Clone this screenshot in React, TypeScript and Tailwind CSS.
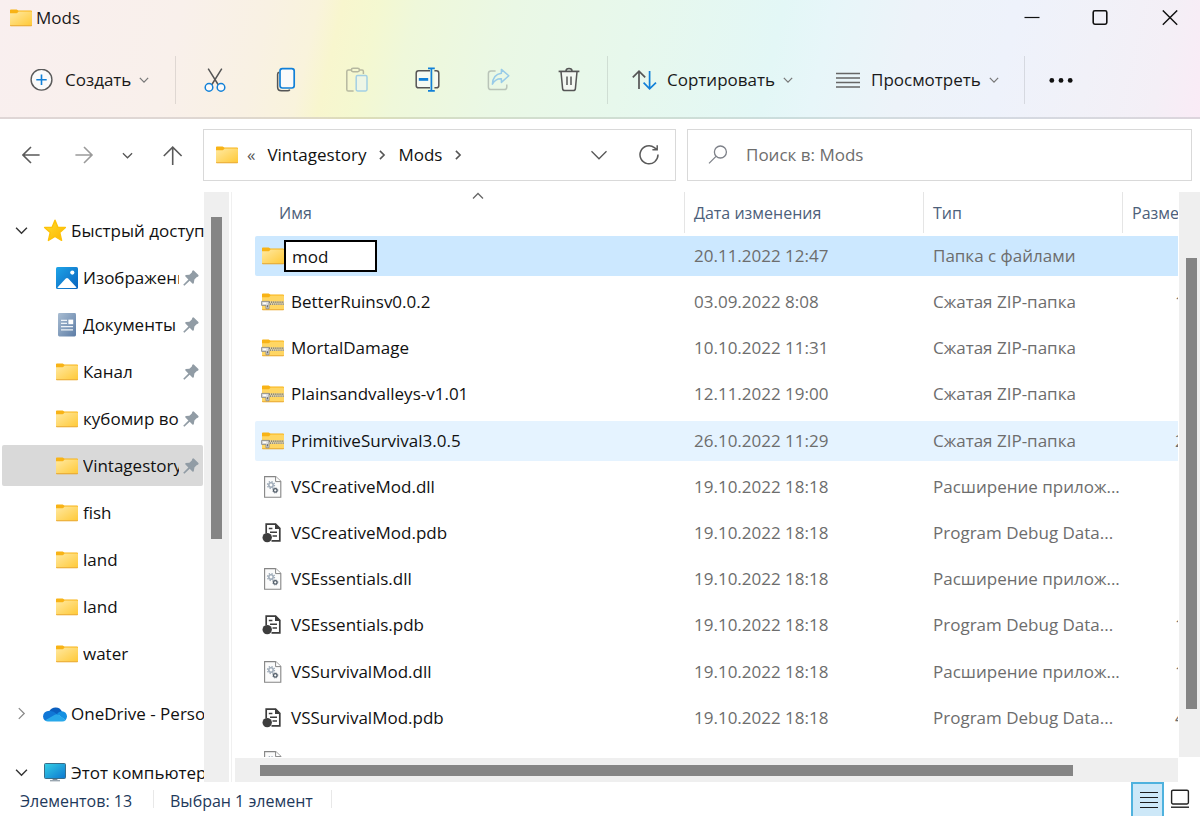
import React from "react";

type IconProps = { className?: string };

function FolderIcon({ className = "" }: IconProps) {
  return (
    <svg className={`shrink-0 ${className}`} width="22" height="18" viewBox="0 0 22 18" aria-hidden="true">
      <defs>
        <linearGradient id="folderFace" x1="0" y1="0" x2="1" y2="1">
          <stop offset="0" stopColor="#ffe9a2" />
          <stop offset="1" stopColor="#ffc937" />
        </linearGradient>
      </defs>
      <path d="M0 1.2Q0 .4 .9 .4H6.6L8.4 1.6H21Q22 1.6 22 2.6V8H0Z" fill="#f8b316" />
      <path d="M0 4.2H6.6Q7.2 4.2 7.7 3.6L8.6 2.6H21.2Q22 2.6 22 3.4V16.6H0Z" fill="url(#folderFace)" />
      <path d="M0 16.2H22V16.6Q22 17.3 21.2 17.3H.8Q0 17.3 0 16.6Z" fill="#e9a21d" />
    </svg>
  );
}

function ZipIcon() {
  return (
    <svg className="shrink-0" width="23" height="18" viewBox="0 0 23 18" aria-hidden="true">
      <path d="M1 1.2Q1 .4 1.9 .4H7.6L9.4 1.6H22Q23 1.6 23 2.6V8H1Z" fill="#f8b316" />
      <path d="M1 4.2H7.6Q8.2 4.2 8.7 3.6L9.6 2.6H22.2Q23 2.6 23 3.4V16.6H1Z" fill="#ffd663" />
      <path d="M1 16.2H23V16.6Q23 17.3 22.2 17.3H1.8Q1 17.3 1 16.6Z" fill="#e9a21d" />
      <rect x="8" y="8.4" width="15" height="3.6" fill="#e6d9b0" />
      <path d="M8 9.2H23" stroke="#5c594f" strokeWidth="1.3" strokeDasharray="1.1 1" />
      <path d="M9 11.2H23" stroke="#6f6b60" strokeWidth="1.3" strokeDasharray="1.1 1" />
      <path d="M.6 8.4H8V15.8H5V12.4H.6Z" fill="#dedede" stroke="#8b8b8b" strokeWidth=".9" />
      <path d="M2.2 10.4H5.2" stroke="#fff" strokeWidth="1.4" />
      <path d="M6.5 12.2V14.4" stroke="#6b6b6b" strokeWidth="1.1" />
    </svg>
  );
}

function DllIcon() {
  return (
    <svg className="ml-[9px] shrink-0" width="18" height="22" viewBox="0 0 18 22" aria-hidden="true">
      <path d="M.6 .6H11.6L16.8 5.6V21.3H.6Z" fill="#fbfbfb" stroke="#858585" strokeWidth="1.1" />
      <path d="M11.6 .6V5.6H16.8" fill="#fff" stroke="#858585" strokeWidth="1" />
      <circle cx="7" cy="9" r="2.2" fill="none" stroke="#9fabb8" strokeWidth="1.5" />
      <circle cx="7" cy="9" r="3.5" fill="none" stroke="#9fabb8" strokeWidth="1.3" strokeDasharray="1.375 1.375" />
      <circle cx="11.3" cy="14.4" r="1.8" fill="none" stroke="#4d5965" strokeWidth="1.3" />
      <circle cx="11.3" cy="14.4" r="2.6" fill="none" stroke="#4d5965" strokeWidth=".7" strokeDasharray="1.02 1.02" />
    </svg>
  );
}

function PdbIcon() {
  return (
    <svg className="shrink-0" width="20" height="20" viewBox="0 0 20 20" aria-hidden="true">
      <path d="M4.2 10V1.2H13.6L17.8 5.4V17.8H9.5" fill="#fff" stroke="#3d3d3d" strokeWidth="1.7" />
      <path d="M13 .6V6H18.4Z" fill="#3d3d3d" />
      <path d="M6.8 5.6H10.4M8 9.2H15M10.5 12.9H15" stroke="#3d3d3d" strokeWidth="1.5" />
      <circle cx="5.2" cy="14.6" r="4.7" fill="#3d3d3d" />
    </svg>
  );
}

function Chevron({
  dir,
  size = 12,
  weight = 15,
  className = "",
}: {
  dir: "down" | "up" | "right";
  size?: number;
  weight?: number;
  className?: string;
}) {
  const d = dir === "down" ? "M1 3.5L6 8.5L11 3.5" : dir === "up" ? "M1 8.5L6 3.5L11 8.5" : "M3.5 1L8.5 6L3.5 11";
  return (
    <svg className={`shrink-0 ${className}`} width={size} height={size} viewBox="0 0 12 12" fill="none" stroke="currentColor" aria-hidden="true">
      <path d={d} strokeWidth={weight / size} />
    </svg>
  );
}

function PinIcon() {
  return (
    <svg className="shrink-0" width="16" height="16" viewBox="0 0 16 16" fill="#919ca5" aria-hidden="true">
      <path d="M9.4 .8Q10.2 0 11 .7L15.4 5.1Q15.9 5.8 15.2 6.4L13.6 7.2L11.4 9.6L10.8 13.2Q10.2 14 9.4 13.4L6.7 10.7L1.4 15.8L.2 14.8L5.4 9.4L2.4 6.4Q1.9 5.6 2.8 5.1L6.4 4.8L8.8 2.5Z" />
    </svg>
  );
}

function StarIcon() {
  return (
    <svg className="shrink-0" width="24" height="24" viewBox="0 0 24 24" aria-hidden="true">
      <defs>
        <linearGradient id="starFace" x1="0" y1="0" x2="1" y2="1">
          <stop offset="0" stopColor="#ffdf2e" />
          <stop offset="1" stopColor="#fcb400" />
        </linearGradient>
      </defs>
      <path
        d="M12 1.2L15 8.4H22.4L16.8 13.6L18.6 21.4L12 17.4L5.4 21.4L7.2 13.6L1.6 8.4H9Z"
        fill="url(#starFace)"
        stroke="#fdc20a"
        strokeWidth="1.4"
        strokeLinejoin="round"
      />
    </svg>
  );
}

function PicturesIcon() {
  return (
    <svg className="shrink-0" width="22" height="22" viewBox="0 0 22 22" aria-hidden="true">
      <defs>
        <linearGradient id="picFace" x1="0" y1="0" x2="1" y2="1">
          <stop offset="0" stopColor="#1ea4e8" />
          <stop offset="1" stopColor="#0a62bd" />
        </linearGradient>
      </defs>
      <rect width="22" height="22" rx="1.6" fill="url(#picFace)" />
      <path d="M1.4 20.6L9.8 11.6Q11 10.4 12.2 11.6L20.6 20.6Q20 21 19.5 21H2.5Q1.8 21 1.4 20.6Z" fill="#fff" />
      <circle cx="16.3" cy="5.6" r="2.1" fill="#fff" />
    </svg>
  );
}

function DocumentsIcon() {
  return (
    <svg className="mx-px shrink-0" width="20" height="24" viewBox="0 0 20 24" aria-hidden="true">
      <defs>
        <linearGradient id="docFace" x1="0" y1="0" x2="1" y2="1">
          <stop offset="0" stopColor="#a9bdd2" />
          <stop offset="1" stopColor="#5d7da6" />
        </linearGradient>
      </defs>
      <rect x="1" width="18" height="23.4" rx="1.4" fill="url(#docFace)" />
      <path d="M4 7.4H10M4 10.4H10M4 13.6H16M4 16.8H16" stroke="#eef3f8" strokeWidth="1.3" />
      <rect x="11.4" y="6.6" width="4.8" height="4.6" fill="#fff" />
    </svg>
  );
}

function OneDriveIcon() {
  return (
    <svg className="shrink-0" width="24" height="16" viewBox="0 0 24 16" aria-hidden="true">
      <path d="M6.4 5.2A7 7 0 0 1 19 5.6L13 11Z" fill="#0a5fbf" />
      <path d="M6.6 4.8Q.4 4.9 0 10.4Q.1 13.2 2.2 14.8L14.6 8.6Q10.8 5 6.6 4.8Z" fill="#1077d6" />
      <path d="M19 5.2Q15.8 5 14 8L22.6 14.2Q24 12.6 24 10.2Q23.5 5.8 19 5.2Z" fill="#1490e2" />
      <path d="M2 14.6L11.8 8.8Q13.8 7.6 15.8 9L22.8 14Q21.4 15.6 19.2 15.6H5Q3.2 15.6 2 14.6Z" fill="#28a8ea" />
    </svg>
  );
}

function ComputerIcon() {
  return (
    <svg className="shrink-0" width="22" height="19" viewBox="0 0 22 19" aria-hidden="true">
      <defs>
        <linearGradient id="screenFace" x1="0" y1="0" x2="1" y2="1">
          <stop offset="0" stopColor="#35d0e6" />
          <stop offset="1" stopColor="#0c76cf" />
        </linearGradient>
      </defs>
      <path d="M8.6 15H13.4V17.2H8.6Z" fill="#7c8a96" />
      <path d="M6 17H16V18.4H6Z" fill="#9aa6b0" />
      <rect x=".5" y=".5" width="21" height="15" rx="1" fill="url(#screenFace)" stroke="#3a6d88" />
    </svg>
  );
}

type Place = { label: string; icon: React.ReactNode; pinned?: boolean; current?: boolean };

const places: Place[] = [
  { label: "Изображения", icon: <PicturesIcon />, pinned: true },
  { label: "Документы", icon: <DocumentsIcon />, pinned: true },
  { label: "Канал", icon: <FolderIcon />, pinned: true },
  { label: "кубомир во", icon: <FolderIcon />, pinned: true },
  { label: "Vintagestory", icon: <FolderIcon />, pinned: true, current: true },
  { label: "fish", icon: <FolderIcon /> },
  { label: "land", icon: <FolderIcon /> },
  { label: "land", icon: <FolderIcon /> },
  { label: "water", icon: <FolderIcon /> },
];

type Entry = { name: string; date: string; kind: "folder" | "zip" | "dll" | "pdb"; size?: string; hover?: boolean };

const entries: Entry[] = [
  { name: "mod", date: "20.11.2022 12:47", kind: "folder" },
  { name: "BetterRuinsv0.0.2", date: "03.09.2022 8:08", kind: "zip", size: "1" },
  { name: "MortalDamage", date: "10.10.2022 11:31", kind: "zip" },
  { name: "Plainsandvalleys-v1.01", date: "12.11.2022 19:00", kind: "zip" },
  { name: "PrimitiveSurvival3.0.5", date: "26.10.2022 11:29", kind: "zip", size: "2", hover: true },
  { name: "VSCreativeMod.dll", date: "19.10.2022 18:18", kind: "dll" },
  { name: "VSCreativeMod.pdb", date: "19.10.2022 18:18", kind: "pdb" },
  { name: "VSEssentials.dll", date: "19.10.2022 18:18", kind: "dll" },
  { name: "VSEssentials.pdb", date: "19.10.2022 18:18", kind: "pdb", size: "1" },
  { name: "VSSurvivalMod.dll", date: "19.10.2022 18:18", kind: "dll", size: "1" },
  { name: "VSSurvivalMod.pdb", date: "19.10.2022 18:18", kind: "pdb", size: "4" },
];

const kindLabel = {
  folder: "Папка с файлами",
  zip: "Сжатая ZIP-папка",
  dll: "Расширение прилож...",
  pdb: "Program Debug Data...",
};

const kindIcon = {
  folder: <FolderIcon className="ml-[7px]" />,
  zip: <ZipIcon />,
  dll: <DllIcon />,
  pdb: <PdbIcon />,
};

function TitleBar() {
  return (
    <div className="flex h-9 items-center pl-[10px]">
      <FolderIcon />
      <h1 className="ml-1 flex-1 text-[17px]">Mods</h1>
      <button aria-label="Свернуть" className="flex h-9 w-[68px] items-center justify-center">
        <svg width="16" height="16" viewBox="0 0 16 16" stroke="#111" strokeWidth="1.2">
          <path d="M.5 7.5H15.5" />
        </svg>
      </button>
      <button aria-label="Развернуть" className="flex h-9 w-[68px] items-center justify-center">
        <svg width="16" height="16" viewBox="0 0 16 16" fill="none" stroke="#111" strokeWidth="1.6">
          <rect x="1.2" y=".8" width="13.6" height="13.4" rx="1.6" />
        </svg>
      </button>
      <button aria-label="Закрыть" className="flex h-9 w-[66px] items-center justify-center">
        <svg className="ml-1.5" width="16" height="16" viewBox="0 0 16 16" stroke="#111" strokeWidth="1.4">
          <path d="M.8 .4L15.2 14.8M15.2 .4L.8 14.8" />
        </svg>
      </button>
    </div>
  );
}

function Divider() {
  return <div className="h-12 w-px bg-black/10" />;
}

function ToolButton({ label, children }: { label: string; children: React.ReactNode }) {
  return (
    <button aria-label={label} className="flex h-12 w-[71px] items-center justify-center">
      <svg width="26" height="26" viewBox="0 0 26 26" fill="none" stroke="#555" strokeWidth="1.5" aria-hidden="true">
        {children}
      </svg>
    </button>
  );
}

function Toolbar() {
  return (
    <div className="mt-5 flex h-12 items-center">
      <button className="flex w-[175px] items-center pl-[30px] text-[17px]">
        <svg width="23" height="23" viewBox="0 0 23 23" fill="none" aria-hidden="true">
          <circle cx="11.5" cy="10.7" r="10.4" fill="#fbfbfb" stroke="#5a5a5a" strokeWidth="1.4" />
          <path d="M11.5 5.5V15.9M6.3 10.7H16.7" stroke="#1180d8" strokeWidth="1.6" />
        </svg>
        <span className="ml-3">Создать</span>
        <Chevron dir="down" size={10} className="ml-2 text-[#777]" />
      </button>
      <Divider />
      <div className="flex pr-[2px] pl-[3px]">
        <ToolButton label="Вырезать">
          <path d="M6.2 1.6L16.4 18M19.8 1.6L9.6 18" />
          <circle cx="7" cy="20.4" r="3.8" fill="#fafafa" stroke="#1180d8" />
          <circle cx="19" cy="20.4" r="3.8" fill="#fafafa" stroke="#1180d8" />
        </ToolButton>
        <ToolButton label="Копировать">
          <path d="M6 5.2Q4.6 5.8 4.6 7.4V20Q4.6 23.8 8.4 23.8H14.6Q16.2 23.8 16.8 22.6" />
          <rect x="7" y="1.6" width="14.2" height="19.4" rx="2.4" fill="#fafafa" stroke="#1180d8" strokeWidth="1.7" />
        </ToolButton>
        <ToolButton label="Вставить">
          <g stroke="#b6b8a0">
            <path d="M9.6 24H4.4Q2.8 24 2.8 22.4V4.6Q2.8 3 4.4 3H7.4M15.4 3H18Q19.4 3 19.4 4.6V7" />
            <rect x="7.4" y="1.3" width="8" height="3.4" rx="1.6" />
          </g>
          <rect x="12.2" y="8.6" width="10.8" height="15.4" rx="1.4" fill="#eef6e6" stroke="#a3cfe4" />
        </ToolButton>
        <ToolButton label="Переименовать">
          <path d="M15 3.8H3.6Q1.2 3.8 1.2 6.2V18.4Q1.2 20.8 3.6 20.8H15M19.4 3.8H21.4Q23.8 3.8 23.8 6.2V18.4Q23.8 20.8 21.4 20.8H19.4" fill="#f6faf2" />
          <path d="M3.8 12.4H13.2" stroke="#1180d8" strokeWidth="2.8" />
          <path d="M13 1.4H19.8M13 23.8H19.8M16.4 1.4V23.8" stroke="#1180d8" strokeWidth="1.7" />
        </ToolButton>
        <ToolButton label="Поделиться">
          <path d="M9.6 4H5Q2.4 4 2.4 6.6V20Q2.4 22.6 5 22.6H18.2Q20.8 22.6 20.8 20V17.6" stroke="#b9c4b8" />
          <path d="M15.4 2.4L22.8 8.8L15.4 15.4V11.8Q9.6 11.4 6.4 17.2Q6.8 7.4 15.4 6.2Z" stroke="#98cbe8" strokeLinejoin="round" />
        </ToolButton>
        <ToolButton label="Удалить">
          <path d="M4 4.6L5.6 21.6Q5.8 23.6 7.8 23.6H16.2Q18.2 23.6 18.4 21.6L20 4.6" fill="#f3f8f2" />
          <path d="M1.6 4.4H22.4" strokeWidth="1.7" />
          <path d="M9 4Q9 1.6 12 1.6Q15 1.6 15 4M10 9.6V18M14 9.6V18" />
        </ToolButton>
      </div>
      <Divider />
      <button className="flex w-[204px] items-center pl-6 text-[17px]">
        <svg width="25" height="22" viewBox="0 0 25 22" fill="none" strokeWidth="1.7" aria-hidden="true">
          <path d="M7 20V2.4M.8 8.4L7 2.2L13.2 8.4" stroke="#555" />
          <path d="M17.6 2V19.6M11.6 13.6L17.6 19.8L24 13.6" stroke="#1180d8" />
        </svg>
        <span className="ml-[10px]">Сортировать</span>
        <Chevron dir="down" size={10} className="ml-2 text-[#777]" />
      </button>
      <button className="flex w-[212px] items-center pl-6 text-[17px]">
        <svg width="24" height="17" viewBox="0 0 24 17" stroke="#666" strokeWidth="1.5" aria-hidden="true">
          <path d="M0 1.5H24M0 6H24M0 10.5H24M0 15H24" />
        </svg>
        <span className="ml-[11px]">Просмотреть</span>
        <Chevron dir="down" size={10} className="ml-2 text-[#777]" />
      </button>
      <Divider />
      <button aria-label="Подробнее" className="flex h-12 w-[71px] items-center justify-center">
        <svg width="24" height="6" viewBox="0 0 24 6" fill="#111" aria-hidden="true">
          <circle cx="2.8" cy="3.4" r="2.4" />
          <circle cx="12" cy="3.4" r="2.4" />
          <circle cx="21.2" cy="3.4" r="2.4" />
        </svg>
      </button>
    </div>
  );
}

function NavBar() {
  return (
    <div className="flex items-center pt-[10px] pr-2 pb-[11px] text-[#555]">
      <div className="flex w-[203px] items-center pl-[22px]">
        <button aria-label="Назад">
          <svg width="19" height="18" viewBox="0 0 19 18" fill="none" stroke="#5a5a5a" strokeWidth="1.6">
            <path d="M17.6 9H1M9 1L1 9L9 17" />
          </svg>
        </button>
        <button aria-label="Вперёд" className="ml-[34px]">
          <svg width="19" height="18" viewBox="0 0 19 18" fill="none" stroke="#9a9a9a" strokeWidth="1.6">
            <path d="M.4 9H17M9 1L17 9L9 17" />
          </svg>
        </button>
        <button aria-label="Последние расположения" className="ml-7">
          <Chevron dir="down" size={11} />
        </button>
        <button aria-label="Вверх" className="ml-[30px]">
          <svg width="20" height="20" viewBox="0 0 20 20" fill="none" stroke="#5a5a5a" strokeWidth="1.6">
            <path d="M9.7 20V2.4M.8 11L9.7 2.2L18.6 11" />
          </svg>
        </button>
      </div>
      <div className="flex h-[52px] w-[473px] items-center border border-[#d9d9d9] pl-3 text-[17px] text-[#111]">
        <FolderIcon />
        <span className="ml-[9px] text-[#555]">«</span>
        <a href="#vintagestory" className="ml-3">Vintagestory</a>
        <Chevron dir="right" size={10} weight={19} className="mx-[11px] text-[#555]" />
        <a href="#mods">Mods</a>
        <Chevron dir="right" size={10} weight={19} className="ml-[11px] text-[#555]" />
        <button aria-label="Предыдущие расположения" className="ml-auto text-[#555]">
          <Chevron dir="down" size={18} />
        </button>
        <button aria-label="Обновить" className="mr-[15px] ml-[31px]">
          <svg width="21" height="21" viewBox="0 0 21 21" fill="none" stroke="#5a5a5a" strokeWidth="1.5">
            <path d="M19 9.6A9 9 0 1 1 15.4 2.6L18.2 4.8M18.2 .2V4.8H13.4" />
          </svg>
        </button>
      </div>
      <label className="ml-[11px] flex h-[52px] flex-1 items-center border border-[#d9d9d9] pl-5">
        <svg width="20" height="20" viewBox="0 0 20 20" fill="none" stroke="#7d8088" strokeWidth="1.3" aria-hidden="true">
          <circle cx="12.4" cy="7" r="6" />
          <path d="M8 11.4L1 18.4" />
        </svg>
        <input
          aria-label="Поиск"
          placeholder="Поиск в: Mods"
          className="ml-[18px] min-w-0 flex-1 text-[17px] outline-none placeholder:text-[#6d6d6d]"
        />
      </label>
    </div>
  );
}

function Sidebar() {
  return (
    <nav className="h-full w-[204px] shrink-0 overflow-hidden pt-[15px] text-[17px] whitespace-nowrap text-[#111]">
      <a href="#quick" className="flex h-[47px] items-center pl-[15px]">
        <Chevron dir="down" size={13} weight={17} className="text-[#333]" />
        <span className="ml-[15px]"><StarIcon /></span>
        <span className="ml-1 overflow-hidden">Быстрый доступ</span>
      </a>
      <ul>
        {places.map((p, i) => (
          <li key={i} className="h-[47px] pt-[3px] pr-px pl-[2px]">
            <a
              href={`#place-${i}`}
              className={`flex h-[41px] items-center rounded-xs pr-1 pl-[54px] ${p.current ? "bg-[#d9d9d9]" : ""}`}
            >
              {p.icon}
              <span className="mr-1 ml-[5px] flex-1 overflow-hidden">{p.label}</span>
              {p.pinned && <PinIcon />}
            </a>
          </li>
        ))}
      </ul>
      <a href="#onedrive" className="mt-[13px] flex h-[47px] items-center pl-[15px]">
        <Chevron dir="right" size={13} className="text-[#888]" />
        <span className="ml-[15px]"><OneDriveIcon /></span>
        <span className="ml-1 overflow-hidden">OneDrive - Personal</span>
      </a>
      <a href="#computer" className="mt-3 flex h-[47px] items-center pl-[15px]">
        <Chevron dir="down" size={13} weight={17} className="text-[#333]" />
        <span className="ml-4"><ComputerIcon /></span>
        <span className="ml-[5px] overflow-hidden">Этот компьютер</span>
      </a>
    </nav>
  );
}

function FileTable() {
  return (
    <table className="w-[1000px] table-fixed border-separate border-spacing-0 text-left text-[17px] whitespace-nowrap">
      <colgroup>
        <col className="w-[429px]" />
        <col className="w-[239px]" />
        <col className="w-[199px]" />
        <col />
      </colgroup>
      <thead>
        <tr className="h-[41px] text-base text-[#4c607a]">
          <th className="relative pl-6 font-normal">
            Имя
            <Chevron dir="up" size={12} className="absolute -top-0.5 left-1/2 ml-[2px] text-[#666]" />
          </th>
          <th className="border-l border-[#e5e5e5] pl-[9px] font-normal">Дата изменения</th>
          <th className="border-l border-[#e5e5e5] pl-[9px] font-normal">Тип</th>
          <th className="border-l border-[#e5e5e5] pl-[9px] font-normal">Размер</th>
        </tr>
      </thead>
      <tbody>
        {entries.map((e, i) => {
          const selected = i === 0;
          const tone = selected ? "bg-[#cce8ff]" : e.hover ? "bg-[#e5f3ff]" : "";
          const cell = `flex h-10 items-center text-[#6d6d6d] ${tone}`;
          return (
            <tr key={e.name} className="h-[46px] nth-[5n]:h-[47px]">
              <td className="p-0">
                <div className={`flex h-10 items-center rounded-l-xs text-[#111] ${tone}`}>
                  {selected ? (
                    <>
                      {kindIcon.folder}
                      <input
                        aria-label="Имя папки"
                        defaultValue={e.name}
                        className="h-8 w-[93px] border-2 border-black bg-white px-[6px] outline-none"
                      />
                    </>
                  ) : (
                    <>
                      <span className={`flex w-9 ${e.kind === "zip" ? "pl-1.5" : e.kind === "pdb" ? "pl-[7px]" : ""}`}>
                        {kindIcon[e.kind]}
                      </span>
                      {e.name}
                    </>
                  )}
                </div>
              </td>
              <td className="p-0">
                <div className={`${cell} pl-[10px]`}>{e.date}</div>
              </td>
              <td className="p-0">
                <div className={`${cell} pl-[10px]`}>{kindLabel[e.kind]}</div>
              </td>
              <td className="p-0">
                <div className={`${cell} pl-[53px]`}>{e.size}</div>
              </td>
            </tr>
          );
        })}
        <tr>
          <td className="pt-2.5 pb-0 pl-0">
            <DllIcon />
          </td>
        </tr>
      </tbody>
    </table>
  );
}

function StatusBar() {
  return (
    <footer className="flex h-[34px] shrink-0 items-center pl-5 text-base text-[#1e395b]">
      <span className="w-[133px] pt-[3px]">Элементов: 13</span>
      <span className="mr-4 h-[18px] w-px bg-[#e8e8e8]" />
      <span className="pt-[3px]">Выбран 1 элемент</span>
      <span className="ml-[18px] h-[18px] w-px bg-[#e8e8e8]" />
      <button
        aria-label="Таблица"
        className="ml-auto flex h-[34px] w-[33px] items-center justify-center border-2 border-b-0 border-[#4fb2de] bg-[#cde8f8]"
      >
        <svg className="ml-0.5" width="18" height="18" viewBox="0 0 18 18" stroke="#1c1c1c" strokeWidth="1.2">
          <path d="M0 1.5H18M0 6.5H18M0 11.5H18M0 16.5H18" />
        </svg>
      </button>
      <button aria-label="Крупные значки" className="flex h-[34px] w-9 items-center pl-[6px]">
        <svg width="20" height="20" viewBox="0 0 20 20" fill="none" stroke="#222" strokeWidth="1.4">
          <rect x="1.6" y="1.2" width="16.8" height="13.8" rx="1.4" />
          <path d="M1 18.2H19" />
        </svg>
      </button>
    </footer>
  );
}

export default function App() {
  return (
    <div className="flex h-screen flex-col overflow-hidden bg-white font-['Open_Sans','Noto_Sans',sans-serif] text-[#191919]">
      <header className="shrink-0 border-b-2 border-black/10 bg-[linear-gradient(103deg,#f9efef_0%,#f9f0eb_15%,#f9f1e3_22%,#f9f3dc_26%,#f8f6ce_28%,#f4f8d1_31%,#eff8da_34%,#eaf8e5_42%,#e7f8ec_52%,#e3f7f6_64%,#e7f6f9_68%,#edf3f9_75%,#eef2fb_83%,#f1f1f8_90%,#f4eff6_96%,#faebf6_100%)] pb-[13px]">
        <TitleBar />
        <Toolbar />
      </header>
      <NavBar />
      <div className="flex min-h-0 flex-1">
        <Sidebar />
        <div className="w-[25px] shrink-0 bg-[#efefef] pt-[25px]">
          <div className="mx-auto h-[322px] w-[11px] bg-[#858585]" />
        </div>
        <main className="ml-[2px] flex min-w-0 flex-1 flex-col border-l border-[#f0f0f0]">
          <div className="flex min-h-0 flex-1">
            <div className="ml-[23px] min-w-0 flex-1 overflow-hidden">
              <FileTable />
            </div>
            <div className="ml-px w-[21px] bg-[#efefef] pt-[66px]">
              <div className="ml-[7px] h-[451px] w-[11px] bg-[#858585]" />
            </div>
          </div>
          <div className="mt-px mr-[22px] ml-[3px] flex h-6 shrink-0 items-center bg-[#efefef] pl-[25px]">
            <div className="h-[11px] w-[813px] bg-[#858585]" />
          </div>
        </main>
      </div>
      <StatusBar />
    </div>
  );
}
